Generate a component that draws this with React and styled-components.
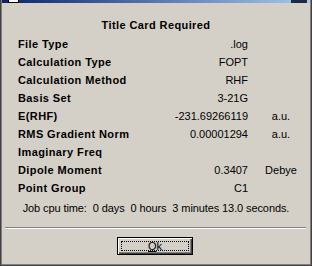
import styled, { createGlobalStyle } from "styled-components";

const GlobalStyle = createGlobalStyle`
    * { box-sizing: border-box; }
    body {
        margin: 0;
        background: #d4d0c8;
        font-family: "Liberation Sans", Arial, sans-serif;
    }
`

const rows = [
    { label: "File Type", value: ".log" },
    { label: "Calculation Type", value: "FOPT" },
    { label: "Calculation Method", value: "RHF" },
    { label: "Basis Set", value: "3-21G" },
    { label: "E(RHF)", value: "-231.69266119", unit: "a.u." },
    { label: "RMS Gradient Norm", value: "0.00001294", unit: "a.u." },
    { label: "Imaginary Freq", value: "" },
    { label: "Dipole Moment", value: "0.3407", unit: "Debye" },
    { label: "Point Group", value: "C1" },
]

export default function App(){
    return(
        <>
            <GlobalStyle />
            <Window>
                <TitleBar>
                    <AppIcon />
                    <CloseButton />
                </TitleBar>
                <Body>
                    <Heading>Title Card Required</Heading>
                    <Table>
                        {rows.map(r => (
                            <Row key={r.label}>
                                <Label>{r.label}</Label>
                                <Value>{r.value}</Value>
                                <Unit>{r.unit}</Unit>
                            </Row>
                        ))}
                    </Table>
                    <CpuTime>{"Job cpu time:  0 days  0 hours  3 minutes 13.0 seconds."}</CpuTime>
                </Body>
                <Separator />
                <Footer>
                    <Button>
                        <Focus><u>O</u>k</Focus>
                    </Button>
                </Footer>
            </Window>
        </>
    )
}

const Window = styled.div`
    width: 312px;
    height: 266px;
    display: flex;
    flex-direction: column;
    background: #d4d0c8;
    border-left: 1px solid #404040;
    border-right: 1px solid #404040;
    border-bottom: 1px solid #404040;
    box-shadow: inset 1px 0 0 #808080, inset -1px -1px 0 #808080;
    overflow: hidden;
`

const TitleBar = styled.div`
    height: 3px;
    margin: 0 1px;
    display: flex;
    align-items: flex-end;
    justify-content: space-between;
    padding: 0 3px 0 6px;
    background: linear-gradient(to right, #0a246a, #a6caf0);
    overflow: hidden;
`

const AppIcon = styled.div`
    flex: none;
    width: 11px;
    height: 12px;
    background: #ffffff;
    border: 1px solid #000000;
`

const CloseButton = styled.div`
    flex: none;
    width: 16px;
    height: 14px;
    background: #d4d0c8;
    border-bottom: 3px solid #1e2a44;
`

const Body = styled.div`
    padding: 13px 0 0 17px;
    font-size: 11px;
    color: #000000;
`

const Heading = styled.div`
    height: 18px;
    line-height: 18px;
    padding-right: 17px;
    text-align: center;
    font-weight: bold;
    letter-spacing: 0.4px;
`

const Table = styled.div`
    margin-top: 1px;
    display: flex;
    flex-direction: column;
`

const Row = styled.div`
    display: grid;
    grid-template-columns: 142px 78px 46px;
    column-gap: 10px;
    height: 18px;
    line-height: 18px;
`

const Label = styled.div`
    font-weight: bold;
    letter-spacing: 0.4px;
    white-space: nowrap;
`

const Value = styled.div`
    text-align: right;
    white-space: nowrap;
`

const Unit = styled.div`
    text-align: center;
`

const CpuTime = styled.div`
    margin-top: 2px;
    height: 18px;
    line-height: 18px;
    padding-right: 17px;
    text-align: center;
    white-space: pre;
    letter-spacing: -0.1px;
`

const Separator = styled.div`
    margin: 10px 5px 0 4px;
    height: 2px;
    border-top: 1px solid #808080;
    border-bottom: 1px solid #ffffff;
`

const Footer = styled.div`
    display: flex;
    justify-content: center;
    padding-top: 8px;
    padding-right: 2px;
`

const Button = styled.div`
    width: 76px;
    height: 18px;
    padding: 3px;
    background: #d4d0c8;
    border: 1px solid #000000;
    box-shadow: inset 1px 1px 0 #ffffff, inset -1px -1px 0 #404040, inset -2px -2px 0 #808080;
    font-size: 11px;
`

const Focus = styled.div`
    height: 100%;
    border: 1px dotted #000000;
    display: flex;
    align-items: center;
    justify-content: center;
    line-height: 1;
`
